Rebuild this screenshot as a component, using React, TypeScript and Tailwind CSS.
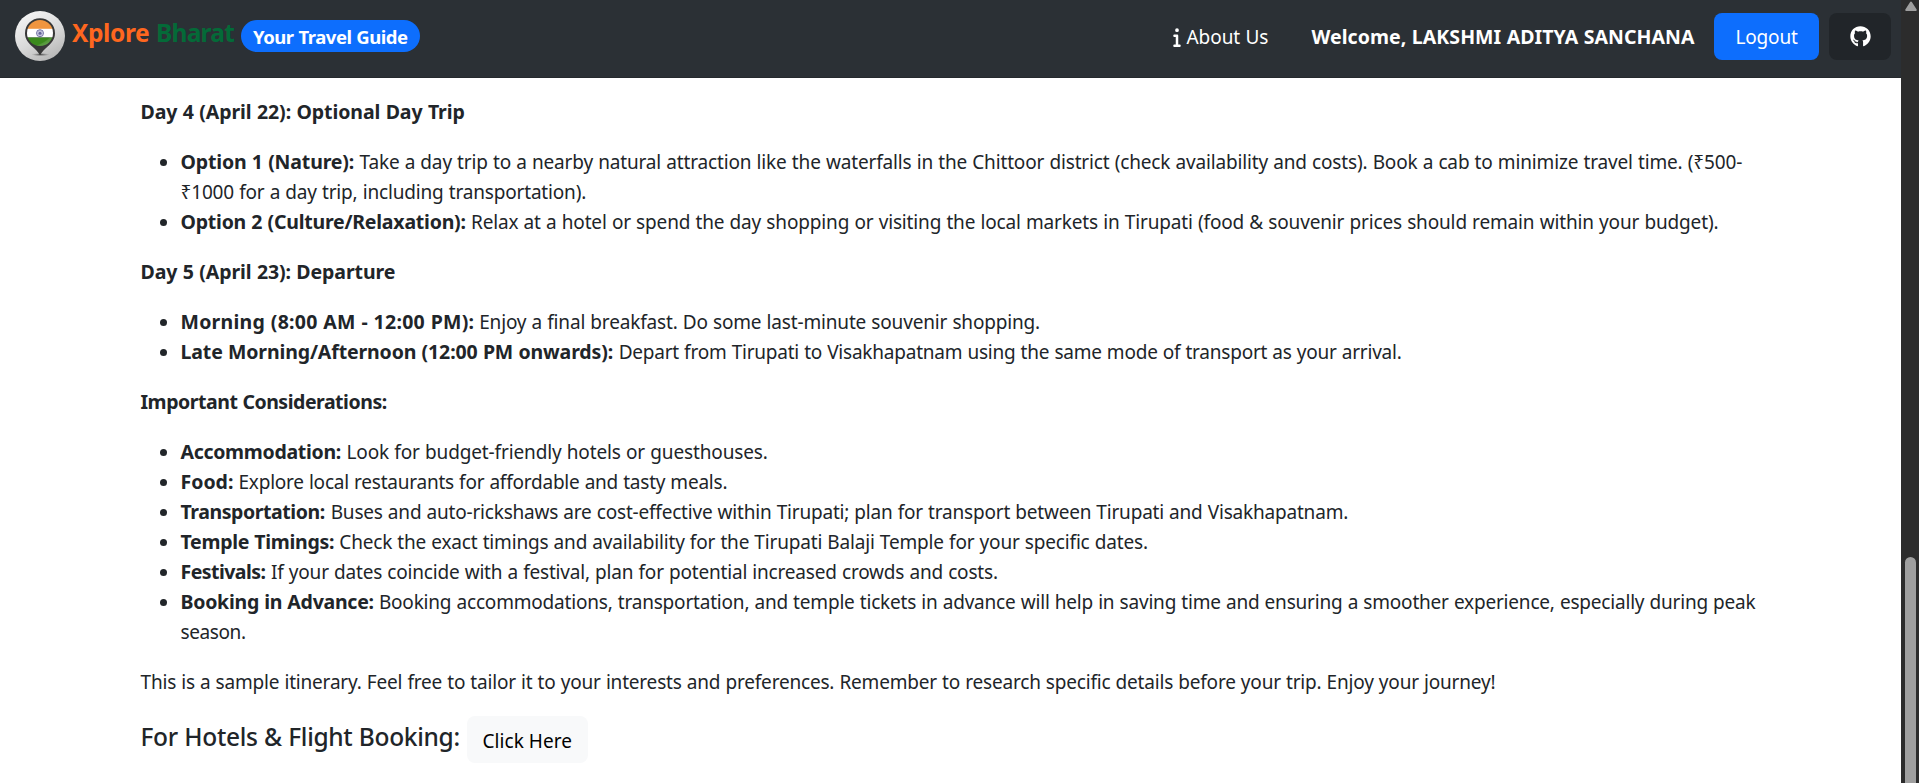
import React from "react";
import { FaGithub, FaInfo } from "react-icons/fa6";

function Logo() {
  return (
    <svg viewBox="0 0 50 50" className="size-[50px] shrink-0">
      <defs>
        <linearGradient id="disc" x1="0.2" y1="0" x2="0.75" y2="1">
          <stop offset="0" stopColor="#f6f6f6" />
          <stop offset="0.55" stopColor="#d9d9d9" />
          <stop offset="1" stopColor="#b4b4b4" />
        </linearGradient>
        <linearGradient id="gloss" x1="0" y1="0" x2="1" y2="1">
          <stop offset="0.45" stopColor="#fff" stopOpacity="0" />
          <stop offset="1" stopColor="#fff" stopOpacity="0.35" />
        </linearGradient>
        <radialGradient id="shade">
          <stop offset="0" stopColor="#333" stopOpacity="0.8" />
          <stop offset="1" stopColor="#555" stopOpacity="0" />
        </radialGradient>
        <clipPath id="flag">
          <circle cx="25" cy="22" r="13" />
        </clipPath>
      </defs>
      <circle cx="25" cy="25" r="25" fill="url(#disc)" />
      <ellipse cx="25.5" cy="43.6" rx="9" ry="1.6" fill="url(#shade)" />
      <path
        d="M25 7.2a15 15 0 0 0-15 15c0 6 3.6 10 7.6 13.6 3 2.7 5.6 5.4 7.4 8.4 1.8-3 4.4-5.7 7.4-8.4C36.4 32.2 40 28.2 40 22.2a15 15 0 0 0-15-15z"
        fill="#383838"
      />
      <g clipPath="url(#flag)">
        <rect x="11" y="8" width="28" height="10" fill="#f0953f" />
        <rect x="11" y="17.8" width="28" height="8.7" fill="#fff" />
        <rect x="11" y="26.5" width="28" height="10" fill="#3b8a1c" />
        <path d="M11 36c10 0 20-4 28-14v15H11z" fill="url(#gloss)" />
      </g>
      <circle cx="25" cy="22.2" r="3.5" fill="#dcdcec" stroke="#66669c" strokeWidth="0.9" />
      <g stroke="#66669c" strokeWidth="0.35">
        <path d="M25 18.7v7M21.5 22.2h7M22.5 19.7l5 5M27.5 19.7l-5 5" />
      </g>
      <circle cx="25" cy="22.2" r="1.5" fill="#66669c" />
    </svg>
  );
}

function Navbar() {
  return (
    <nav className="flex h-[78px] items-start border-b border-[#25292d] bg-[#2b3035] pr-2.5 pl-[15px] text-[19px] whitespace-nowrap text-white">
      <a className="flex items-start pt-[11px] text-[24.5px] leading-[30px] font-bold">
        <Logo />
        <span className="mt-[7px] ml-[7px] w-[84px] tracking-[-0.4px] text-[#ff671f]">Xplore</span>
        <span className="mt-[7px] w-[85px] tracking-[-0.77px] text-[#046a38]">Bharat</span>
        <span className="mt-[9px] h-8 w-[179px] rounded-full bg-[#0d6efd] pl-3 text-[18.5px] leading-[33px] tracking-[-0.46px] text-white [word-spacing:0.4px]">
          Your Travel Guide
        </span>
      </a>
      <div className="mt-[13px] ml-auto flex h-[47px] items-center leading-[48px]">
        <a className="flex w-[139px] items-center">
          <FaInfo className="mr-1.5 h-5 w-2" />
          <span className="tracking-[-0.05px] [word-spacing:0.4px]">About Us</span>
        </a>
        <span className="w-[402.5px] text-[19.5px] font-bold tracking-[0.055px] [word-spacing:0.4px]">
          Welcome, LAKSHMI ADITYA SANCHANA
        </span>
        <button className="h-[47px] w-[105px] rounded-lg bg-[#0d6efd] pl-[21.5px] text-left tracking-[-0.175px]">Logout</button>
        <button className="ml-2.5 flex h-[47px] w-[62px] items-center justify-center rounded-lg bg-[#212529]">
          <FaGithub className="size-[21px]" />
        </button>
      </div>
    </nav>
  );
}

function Title({ children, className }: { children: string; className: string }) {
  return <p className={`h-[30px] text-[19.5px] font-bold ${className}`}>{children}</p>;
}

type ItemProps = {
  label: string;
  labelClass: string;
  text: string;
  textClass: string;
  rest?: string;
  restClass?: string;
};

function Item({ label, labelClass, text, textClass, rest, restClass }: ItemProps) {
  return (
    <li className="flex">
      <span className="mt-3 mr-[13.5px] size-[7px] shrink-0 rounded-full bg-[#212529]" />
      <div>
        <div className="flex h-[30px] items-baseline">
          <strong className={`shrink-0 text-[19.5px] font-bold ${labelClass}`}>{label} </strong>
          <span className={textClass}>{text}</span>
        </div>
        {rest && <div className={`h-[30px] ${restClass}`}>{rest}</div>}
      </div>
    </li>
  );
}

function Itinerary() {
  return (
    <main className="flex flex-col gap-5 pt-[19px] pl-[140.5px] text-[19px] leading-[30px] whitespace-nowrap text-[#212529] [word-spacing:0.4px]">
      <Title className="tracking-[-0.075px]">Day 4 (April 22): Optional Day Trip</Title>
      <ul className="pl-[19.5px]">
        <Item
          label="Option 1 (Nature):"
          labelClass="w-[179px] tracking-[-0.15px]"
          text="Take a day trip to a nearby natural attraction like the waterfalls in the Chittoor district (check availability and costs). Book a cab to minimize travel time. (₹500-"
          textClass="tracking-[-0.152px]"
          rest="₹1000 for a day trip, including transportation)."
          restClass="tracking-[-0.173px]"
        />
        <Item
          label="Option 2 (Culture/Relaxation):"
          labelClass="w-[290.5px] tracking-[-0.223px]"
          text="Relax at a hotel or spend the day shopping or visiting the local markets in Tirupati (food & souvenir prices should remain within your budget)."
          textClass="tracking-[-0.148px]"
        />
      </ul>
      <Title className="tracking-[-0.081px]">Day 5 (April 23): Departure</Title>
      <ul className="pl-[19.5px]">
        <Item
          label="Morning (8:00 AM - 12:00 PM):"
          labelClass="w-[298.7px] tracking-[0.25px]"
          text="Enjoy a final breakfast. Do some last-minute souvenir shopping."
          textClass="tracking-[-0.164px]"
        />
        <Item
          label="Late Morning/Afternoon (12:00 PM onwards):"
          labelClass="w-[438.2px] tracking-[-0.13px]"
          text="Depart from Tirupati to Visakhapatnam using the same mode of transport as your arrival."
          textClass="tracking-[-0.22px]"
        />
      </ul>
      <Title className="tracking-[-0.47px]">Important Considerations:</Title>
      <ul className="pl-[19.5px]">
        <Item
          label="Accommodation:"
          labelClass="w-[166px] tracking-[-0.3px]"
          text="Look for budget-friendly hotels or guesthouses."
          textClass="tracking-[-0.131px]"
        />
        <Item
          label="Food:"
          labelClass="w-[58px]"
          text="Explore local restaurants for affordable and tasty meals."
          textClass="tracking-[-0.222px]"
        />
        <Item
          label="Transportation:"
          labelClass="w-[150.2px] tracking-[-0.43px]"
          text="Buses and auto-rickshaws are cost-effective within Tirupati; plan for transport between Tirupati and Visakhapatnam."
          textClass="tracking-[-0.195px]"
        />
        <Item
          label="Temple Timings:"
          labelClass="w-[158.8px] tracking-[-0.29px]"
          text="Check the exact timings and availability for the Tirupati Balaji Temple for your specific dates."
          textClass="tracking-[-0.17px]"
        />
        <Item
          label="Festivals:"
          labelClass="w-[90.5px] tracking-[-0.54px]"
          text="If your dates coincide with a festival, plan for potential increased crowds and costs."
          textClass="tracking-[-0.182px]"
        />
        <Item
          label="Booking in Advance:"
          labelClass="w-[198.4px] tracking-[-0.26px]"
          text="Booking accommodations, transportation, and temple tickets in advance will help in saving time and ensuring a smoother experience, especially during peak"
          textClass="tracking-[-0.192px]"
          rest="season."
          restClass="tracking-[-0.4px]"
        />
      </ul>
      <p className="tracking-[-0.189px]">
        This is a sample itinerary. Feel free to tailor it to your interests and preferences. Remember to research specific
        details before your trip. Enjoy your journey!
      </p>
      <div className="-mt-px flex">
        <h5 className="w-[326.5px] pt-1.5 text-[24.5px] font-medium tracking-[-0.32px]">For Hotels & Flight Booking:</h5>
        <button className="h-[47px] w-[121px] rounded-lg bg-[#f8f9fa] pt-[3px] pl-[15.5px] text-left tracking-[0.058px] text-black">
          Click Here
        </button>
      </div>
    </main>
  );
}

function Scrollbar() {
  return (
    <div className="flex w-[18px] shrink-0 flex-col bg-[#2c2c2c] pl-[3px]">
      <svg viewBox="0 0 14 12" className="h-3 w-3.5">
        <path d="M7 2.500l4.800 7.500H2.200z" fill="#9f9f9f" stroke="#9f9f9f" strokeWidth="2" strokeLinejoin="round" />
      </svg>
      <div className="mt-[545px] ml-px w-[11px] grow rounded-t-full bg-[#9f9f9f]" />
    </div>
  );
}

export default function App() {
  return (
    <div className="flex h-[783px] overflow-hidden bg-white font-['Noto_Sans',sans-serif]">
      <div className="w-[1901px]">
        <Navbar />
        <Itinerary />
      </div>
      <Scrollbar />
    </div>
  );
}
